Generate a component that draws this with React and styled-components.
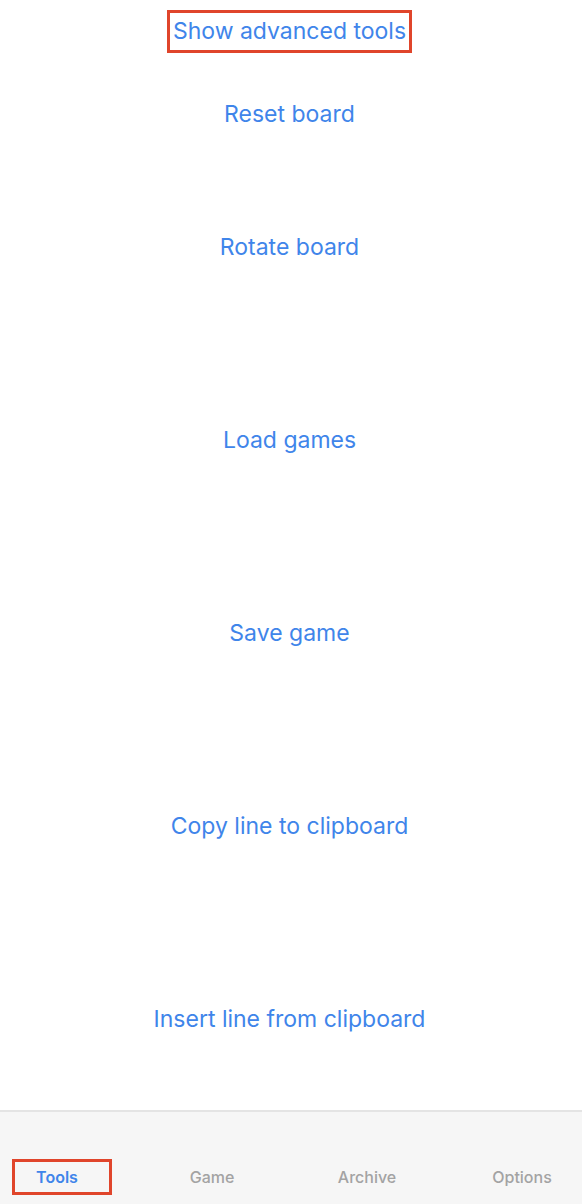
import React from "react";
import styled, { createGlobalStyle } from "styled-components";

const GlobalStyle = createGlobalStyle`
  html, body {
    margin: 0;
    padding: 0;
    background: #ffffff;
  }
  body {
    font-family: Inter, "Liberation Sans", sans-serif;
    -webkit-font-smoothing: antialiased;
  }
`;

const Page = styled.div`
  display: flex;
  flex-direction: column;
  height: 1204px;
  width: 582px;
  overflow: hidden;
`;

const Content = styled.main`
  flex: 1;
  display: flex;
  flex-direction: column;
  align-items: center;
  padding: 10px 3px 0 0;
`;

const ActionButton = styled.button`
  font-family: inherit;
  font-size: 23px;
  font-weight: 400;
  line-height: 28px;
  color: #3f85ea;
  background: none;
  border: ${props => (props.highlighted ? "3px solid #e0452b" : "none")};
  padding: ${props => (props.highlighted ? "4px 3px 5px" : "0")};
  margin-top: ${props => props.gap || 0}px;
  cursor: pointer;
`;

const TabBar = styled.nav`
  height: 94px;
  box-sizing: border-box;
  background: #f6f6f6;
  border-top: 2px solid #e4e4e4;
  display: flex;
  align-items: flex-start;
  gap: 55px;
  padding: 47px 0 0 12px;
`;

const Tab = styled.button`
  width: 100px;
  height: 36px;
  box-sizing: border-box;
  flex-shrink: 0;
  font-family: inherit;
  font-size: 16px;
  font-weight: ${props => (props.active ? 600 : 500)};
  color: ${props => (props.active ? "#3f85ea" : "#a3a3a3")};
  background: none;
  border: ${props => (props.active ? "3px solid #e0452b" : "3px solid transparent")};
  padding: 0 10px 0 0;
`;

const actions = [
  { label: "Reset board", gap: 47 },
  { label: "Rotate board", gap: 105 },
  { label: "Load games", gap: 165 },
  { label: "Save game", gap: 165 },
  { label: "Copy line to clipboard", gap: 165 },
  { label: "Insert line from clipboard", gap: 165 },
];

const tabs = ["Tools", "Game", "Archive", "Options"];

const App = () => {
  return (
    <Page>
      <GlobalStyle />
      <Content>
        <ActionButton highlighted>Show advanced tools</ActionButton>
        {actions.map(a => (
          <ActionButton key={a.label} gap={a.gap}>
            {a.label}
          </ActionButton>
        ))}
      </Content>
      <TabBar>
        {tabs.map(t => (
          <Tab key={t} active={t === "Tools"}>
            {t}
          </Tab>
        ))}
      </TabBar>
    </Page>
  );
};

export default App;
